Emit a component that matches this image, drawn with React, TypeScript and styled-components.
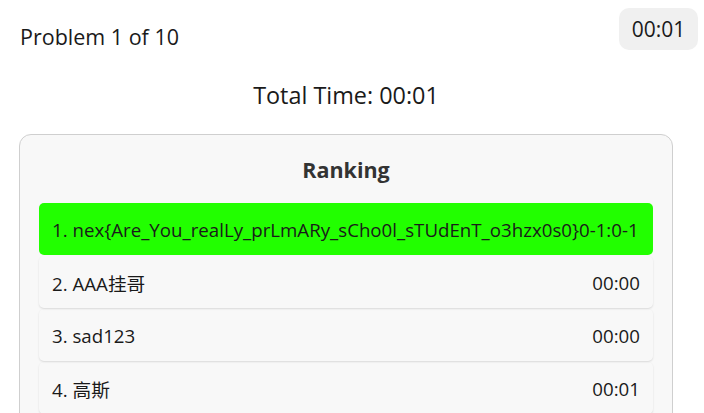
import * as React from "react";
import styled, { createGlobalStyle } from "styled-components";

const FONT = `"Open Sans", "Noto Sans CJK SC", sans-serif`;

const GlobalStyle = createGlobalStyle`
  body {
    margin: 0;
    background: #ffffff;
    font-family: ${FONT};
    color: #1a1a1a;
  }
`;

type Entry = {
  name: string;
  time: string;
};

const ranking: Entry[] = [
  { name: "nex{Are_You_realLy_prLmARy_sCho0l_sTUdEnT_o3hzx0s0}0-1:0-1", time: "" },
  { name: "AAA挂哥", time: "00:00" },
  { name: "sad123", time: "00:00" },
  { name: "高斯", time: "00:01" },
];

//page wrapper, the timer sits at the far right edge
const Page = styled.div`
  padding: 8px 6px 0 19px;
`;

const Header = styled.div`
  display: flex;
  justify-content: space-between;
  align-items: flex-start;
`;

const Title = styled.div`
  margin-top: 16px;
  margin-left: 1px;
  font-size: 21.5px;
  line-height: 26px;
`;

const TimerPill = styled.div`
  display: flex;
  align-items: center;
  justify-content: center;
  width: 79px;
  height: 42px;
  border-radius: 10px;
  background: #f0f0f0;
  font-size: 21px;
`;

const Main = styled.div`
  width: 654px;
`;

const TotalTime = styled.div`
  margin-top: 30px;
  text-align: center;
  font-size: 23.4px;
  line-height: 30px;
`;

const Card = styled.div`
  margin-top: 24px;
  padding: 23px 19px 20px;
  border: 1px solid #cfcfcf;
  border-radius: 12px;
  background: #f8f8f8;
`;

const CardTitle = styled.div`
  margin-bottom: 21px;
  text-align: center;
  font-size: 21.5px;
  line-height: 24px;
  font-weight: 700;
  color: #333333;
`;

type RowProps = {
  $first: boolean;
};

const Row = styled.div<RowProps>`
  display: flex;
  justify-content: space-between;
  align-items: center;
  height: 52px;
  margin-bottom: 1px;
  padding: 0 13px;
  border-radius: 5px;
  font-size: 18.7px;
  white-space: nowrap;
  background: ${(props) => (props.$first ? "#22ff00" : "transparent")};
  box-shadow: ${(props) =>
    props.$first ? "none" : "0 1px 2px rgba(0, 0, 0, 0.12)"};
`;

function App() {
  return (
    <Page>
      <GlobalStyle />
      <Header>
        <Title>Problem 1 of 10</Title>
        <TimerPill>00:01</TimerPill>
      </Header>
      <Main>
        <TotalTime>Total Time: 00:01</TotalTime>
        <Card>
          <CardTitle>Ranking</CardTitle>
          {ranking.map((entry, i) => (
            <Row key={i} $first={i === 0}>
              <span>
                {i + 1}. {entry.name}
              </span>
              <span>{entry.time}</span>
            </Row>
          ))}
        </Card>
      </Main>
    </Page>
  );
}

export default App;
